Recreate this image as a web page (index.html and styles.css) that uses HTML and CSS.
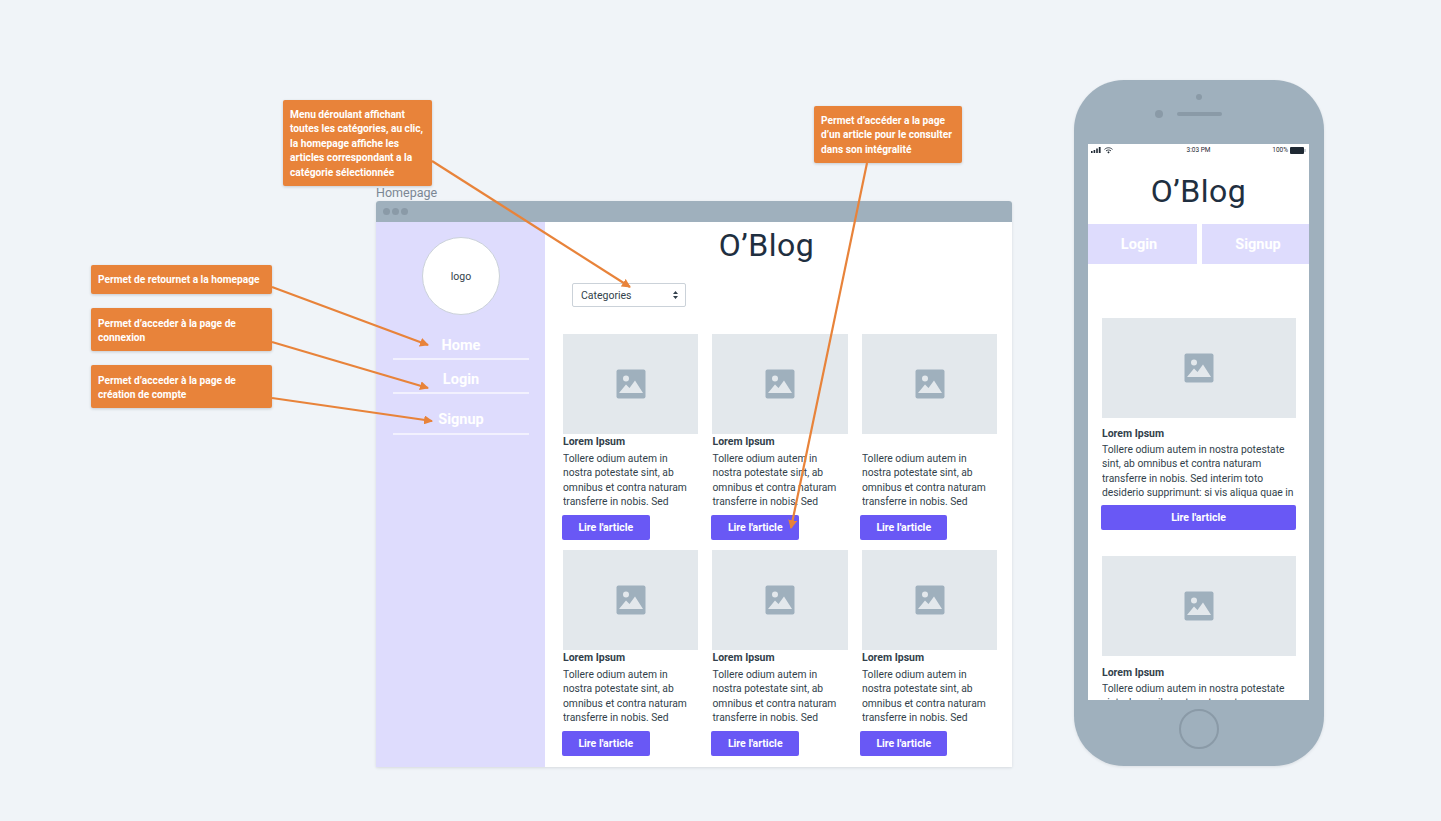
FILE: index.html
```html
<!DOCTYPE html>
<html lang="fr">
<head>
  <meta charset="UTF-8">
  <meta name="viewport" content="width=device-width, initial-scale=1.0">
  <title>O'Blog wireframes</title>
  <link rel="stylesheet" href="styles.css">
</head>
<body>
  <svg class="defs" width="0" height="0">
    <symbol id="pic" viewBox="0 0 30 30">
      <rect x="0.5" y="0.5" width="29" height="29" rx="2" fill="#9fb0bd"/>
      <circle cx="10" cy="9.5" r="3" fill="#e3e8ec"/>
      <path d="M3 24 L10 15.5 L13.5 19 L19 11.5 L27 24 Z" fill="#e3e8ec"/>
    </symbol>
  </svg>

  <div class="canvas">
    <div class="frame-label">Homepage</div>

    <section class="window">
      <div class="titlebar"><i></i><i></i><i></i></div>
      <div class="window-body">
        <aside class="sidebar">
          <div class="logo">logo</div>
          <a class="nav-item nav-home">Home</a>
          <a class="nav-item nav-login">Login</a>
          <a class="nav-item nav-signup">Signup</a>
        </aside>
        <main class="content">
          <h1 class="brand">O’Blog</h1>
          <div class="select">
            <span>Categories</span>
            <svg width="5" height="8" viewBox="0 0 5 8"><path d="M2.5 0 L5 3 H0 Z M2.5 8 L0 5 H5 Z" fill="#323f4b"/></svg>
          </div>
          <div class="grid">
            <article class="card">
              <div class="thumb"><svg width="30" height="30"><use href="#pic"/></svg></div>
              <h2>Lorem Ipsum</h2>
              <p>Tollere odium autem in nostra potestate sint, ab omnibus et contra naturam transferre in nobis. Sed</p>
              <a class="btn">Lire l'article</a>
            </article>
            <article class="card">
              <div class="thumb"><svg width="30" height="30"><use href="#pic"/></svg></div>
              <h2>Lorem Ipsum</h2>
              <p>Tollere odium autem in nostra potestate sint, ab omnibus et contra naturam transferre in nobis. Sed</p>
              <a class="btn">Lire l'article</a>
            </article>
            <article class="card card-last">
              <div class="thumb"><svg width="30" height="30"><use href="#pic"/></svg></div>
              <h2>&nbsp;</h2>
              <p>Tollere odium autem in nostra potestate sint, ab omnibus et contra naturam transferre in nobis. Sed</p>
              <a class="btn">Lire l'article</a>
            </article>
            <article class="card">
              <div class="thumb"><svg width="30" height="30"><use href="#pic"/></svg></div>
              <h2>Lorem Ipsum</h2>
              <p>Tollere odium autem in nostra potestate sint, ab omnibus et contra naturam transferre in nobis. Sed</p>
              <a class="btn">Lire l'article</a>
            </article>
            <article class="card">
              <div class="thumb"><svg width="30" height="30"><use href="#pic"/></svg></div>
              <h2>Lorem Ipsum</h2>
              <p>Tollere odium autem in nostra potestate sint, ab omnibus et contra naturam transferre in nobis. Sed</p>
              <a class="btn">Lire l'article</a>
            </article>
            <article class="card card-last">
              <div class="thumb"><svg width="30" height="30"><use href="#pic"/></svg></div>
              <h2>Lorem Ipsum</h2>
              <p>Tollere odium autem in nostra potestate sint, ab omnibus et contra naturam transferre in nobis. Sed</p>
              <a class="btn">Lire l'article</a>
            </article>
          </div>
        </main>
      </div>
    </section>

    <section class="phone">
      <div class="phone-top">
        <span class="cam"></span>
        <span class="sensor"></span>
        <span class="speaker"></span>
      </div>
      <div class="screen">
        <div class="status">
          <span class="status-left">
            <svg width="10" height="6" viewBox="0 0 10 6"><path d="M0 4h1.6v2H0zM2.6 3h1.6v3H2.6zM5.2 1.5h1.6V6H5.2zM7.8 0h1.8v6H7.8z" fill="#1f2933"/></svg>
            <svg width="9" height="7" viewBox="0 0 9 7"><path d="M0.5 2.4C3 0.2 6 0.2 8.5 2.4M2 3.9C3.5 2.7 5.5 2.7 7 3.9" fill="none" stroke="#1f2933" stroke-width="0.9"/><path d="M3.3 5.2L4.5 4.3L5.7 5.2L4.5 6.6Z" fill="#1f2933"/></svg>
          </span>
          <span class="status-time">3:03 PM</span>
          <span class="status-right">100%
            <svg width="16" height="7" viewBox="0 0 16 7"><rect x="0" y="0" width="14" height="7" rx="1" fill="#1f2933"/><rect x="14.5" y="2" width="1" height="3" fill="#9aa5b1"/></svg>
          </span>
        </div>
        <div class="brand brand-phone">O’Blog</div>
        <div class="phone-nav"><a class="nav-left">Login</a><a class="nav-right">Signup</a></div>
        <article class="phone-card">
          <div class="thumb"><svg width="30" height="30"><use href="#pic"/></svg></div>
          <h2>Lorem Ipsum</h2>
          <p>Tollere odium autem in nostra potestate sint, ab omnibus et contra naturam transferre in nobis. Sed interim toto desiderio supprimunt: si vis aliqua quae in</p>
          <a class="btn btn-wide">Lire l'article</a>
        </article>
        <article class="phone-card phone-card-2">
          <div class="thumb"><svg width="30" height="30"><use href="#pic"/></svg></div>
          <h2>Lorem Ipsum</h2>
          <p>Tollere odium autem in nostra potestate sint, ab omnibus et contra naturam</p>
        </article>
      </div>
      <div class="phone-bottom"><span class="home-btn"></span></div>
    </section>

    <div class="note note-menu">Menu déroulant affichant toutes les catégories, au clic, la homepage affiche les articles correspondant a la catégorie sélectionnée</div>
    <div class="note note-article">Permet d’accéder a la page d’un article pour le consulter dans son intégralité</div>
    <div class="note note-side note-home">Permet de retournet a la homepage</div>
    <div class="note note-side note-two note-login">Permet d’acceder à la page de connexion</div>
    <div class="note note-side note-two note-signup">Permet d’acceder à la page de création de compte</div>

    <svg class="arrows" width="1441" height="821" viewBox="0 0 1441 821">
      <defs>
        <marker id="head" markerWidth="9" markerHeight="9" refX="8" refY="4.5" orient="auto" markerUnits="userSpaceOnUse">
          <path d="M0 0 L9 4.5 L0 9 Z" fill="#e8833a"/>
        </marker>
      </defs>
      <g stroke="#e8833a" stroke-width="2.2" fill="none">
        <line x1="432" y1="161" x2="630" y2="287" marker-end="url(#head)"/>
        <line x1="867" y1="163" x2="791" y2="528" marker-end="url(#head)"/>
        <line x1="272" y1="287" x2="428" y2="345" marker-end="url(#head)"/>
        <line x1="272" y1="342" x2="428" y2="388" marker-end="url(#head)"/>
        <line x1="272" y1="398" x2="432" y2="421" marker-end="url(#head)"/>
      </g>
    </svg>
  </div>
</body>
</html>
```

FILE: styles.css
```css
* {
  box-sizing: border-box;
}

body {
  margin: 0;
  background-color: #f0f4f8;
  font-family: Roboto, "Noto Sans", sans-serif;
  color: #323f4b;
  overflow: hidden;
}

.defs {
  position: absolute;
}

h1, h2, p {
  margin: 0;
  font-weight: normal;
}

.canvas {
  position: relative;
  width: 1441px;
  height: 821px;
}

.frame-label {
  position: absolute;
  left: 376px;
  top: 185px;
  font-size: 12.5px;
  line-height: 15px;
  color: #7b8794;
}

/* desktop frame */
.window {
  position: absolute;
  left: 376px;
  top: 201px;
  width: 636px;
  height: 566px;
  background-color: #fff;
  border-radius: 3px 3px 0 0;
  box-shadow: 0 1px 3px rgba(31, 41, 51, 0.12);
  display: flex;
  flex-direction: column;
}

.titlebar {
  height: 21px;
  flex: none;
  background-color: #9fb0bd;
  border-radius: 3px 3px 0 0;
  display: flex;
  align-items: center;
  gap: 2px;
  padding-left: 7px;
}

.titlebar i {
  width: 7px;
  height: 7px;
  border-radius: 50%;
  background-color: #8a9aa7;
}

.window-body {
  flex: 1;
  display: flex;
  min-height: 0;
}

.sidebar {
  width: 169px;
  flex: none;
  background-color: #dedcfd;
  display: flex;
  flex-direction: column;
  align-items: center;
  padding: 15px 16px 0 17px;
}

.logo {
  width: 78px;
  height: 78px;
  flex: none;
  border-radius: 50%;
  background-color: #fff;
  border: 1px solid #cbd2d9;
  display: flex;
  align-items: center;
  justify-content: center;
  font-size: 10.5px;
}

.nav-item {
  width: 136px;
  text-align: center;
  color: #fff;
  font-size: 14.5px;
  font-weight: 700;
  line-height: 18px;
  border-bottom: 2px solid #f2f1fe;
}

.nav-home {
  margin-top: 22px;
  padding-bottom: 3px;
}

.nav-login {
  margin-top: 11px;
  padding-bottom: 3px;
}

.nav-signup {
  margin-top: 17px;
  padding-bottom: 4px;
}

.content {
  flex: 1;
  min-width: 0;
  padding: 0 14px 0 18px;
}

.brand {
  font-size: 32px;
  line-height: 44px;
  text-align: center;
  color: #1f2f40;
  letter-spacing: 0.5px;
}

.content .brand {
  margin-top: 1px;
  padding-right: 28px;
}

.select {
  width: 114px;
  height: 24px;
  margin: 16px 0 0 9px;
  border: 1px solid #cbd2d9;
  border-radius: 2px;
  background-color: #fff;
  display: flex;
  align-items: center;
  justify-content: space-between;
  padding: 0 7px 0 8px;
  font-size: 10.5px;
}

.grid {
  display: grid;
  grid-template-columns: repeat(3, 135.4px);
  grid-auto-rows: 216px;
  column-gap: 14.1px;
  margin-top: 27px;
}

.thumb {
  height: 100px;
  background-color: #e3e8ec;
  display: flex;
  align-items: center;
  justify-content: center;
}

.card h2,
.phone-card h2 {
  font-size: 10.5px;
  font-weight: 700;
  line-height: 14px;
}

.card h2 {
  margin-top: 1px;
}

.card p,
.phone-card p {
  font-size: 10.3px;
  line-height: 14.4px;
  overflow: hidden;
}

.card p {
  height: 58px;
  margin-top: 3px;
}

.btn {
  display: flex;
  align-items: center;
  justify-content: center;
  width: 87.5px;
  height: 25px;
  border-radius: 2px;
  background-color: #6958f5;
  color: #fff;
  font-size: 10.5px;
  font-weight: 700;
}

.card .btn {
  margin: 5px 0 0 -1px;
}

.card-last .btn {
  margin-left: -2px;
}

/* phone frame */
.phone {
  position: absolute;
  left: 1074px;
  top: 80px;
  width: 250px;
  height: 686px;
  border-radius: 50px;
  background-color: #9fb0bd;
  box-shadow: 0 1px 3px rgba(31, 41, 51, 0.1);
  display: flex;
  flex-direction: column;
  align-items: flex-start;
}

.phone-top {
  position: relative;
  height: 64px;
  width: 100%;
  flex: none;
}

.cam {
  position: absolute;
  left: 81px;
  top: 30px;
  width: 8px;
  height: 8px;
  border-radius: 50%;
  background-color: #8a9aa7;
}

.sensor {
  position: absolute;
  left: 122px;
  top: 14px;
  width: 6px;
  height: 6px;
  border-radius: 50%;
  background-color: #8a9aa7;
}

.speaker {
  position: absolute;
  left: 103px;
  top: 32px;
  width: 45px;
  height: 4px;
  border-radius: 2px;
  background-color: #8a9aa7;
}

.screen {
  width: 221px;
  height: 556px;
  margin-left: 14px;
  flex: none;
  background-color: #fff;
  overflow: hidden;
}

.status {
  height: 12px;
  display: grid;
  grid-template-columns: 1fr auto 1fr;
  align-items: center;
  padding: 0 3px;
  font-size: 6.5px;
  color: #1f2933;
}

.status-left {
  display: flex;
  align-items: center;
  gap: 3px;
}

.status-right {
  display: flex;
  align-items: center;
  justify-content: flex-end;
  gap: 2px;
}

.brand-phone {
  margin-top: 13px;
}

.phone-nav {
  display: grid;
  grid-template-columns: 109px 107px;
  column-gap: 5px;
  margin-top: 11px;
}

.phone-nav a {
  height: 40px;
  display: flex;
  align-items: center;
  justify-content: center;
  background-color: #dedcfd;
  color: #fff;
  font-size: 14.5px;
  font-weight: 700;
}

.phone-nav .nav-left {
  padding-right: 7px;
}

.phone-nav .nav-right {
  padding-left: 5px;
}

.phone-card {
  padding: 0 13px 0 14px;
  margin-top: 54px;
}

.phone-card h2 {
  margin-top: 9px;
}

.phone-card p {
  height: 58px;
  margin-top: 2px;
}

.btn-wide {
  width: 195px;
  margin: 4px 0 0 -1px;
}

.phone-card-2 {
  margin-top: 26px;
}

.phone-card-2 h2 {
  margin-top: 10px;
}

.phone-bottom {
  flex: 1;
  width: 100%;
  display: flex;
  align-items: center;
  justify-content: center;
  padding-bottom: 8px;
}

.home-btn {
  width: 40px;
  height: 40px;
  border-radius: 50%;
  border: 2px solid #8a9aa7;
}

/* annotations */
.note {
  position: absolute;
  background-color: #e8833a;
  color: #fff;
  border-radius: 2px;
  box-shadow: 0 1px 3px rgba(31, 41, 51, 0.2);
  font-size: 10.2px;
  font-weight: 700;
  line-height: 14.4px;
  padding: 8px 7px 0;
}

.note-menu {
  left: 283px;
  top: 100px;
  width: 149px;
  height: 86px;
}

.note-article {
  left: 814px;
  top: 106px;
  width: 148px;
  height: 57px;
}

.note-side {
  left: 91px;
  width: 181px;
}

.note-two {
  padding-top: 9px;
}

.note-home {
  top: 265px;
  height: 29px;
}

.note-login {
  top: 308px;
  height: 43px;
}

.note-signup {
  top: 365px;
  height: 43px;
}

.arrows {
  position: absolute;
  left: 0;
  top: 0;
  pointer-events: none;
}
```
